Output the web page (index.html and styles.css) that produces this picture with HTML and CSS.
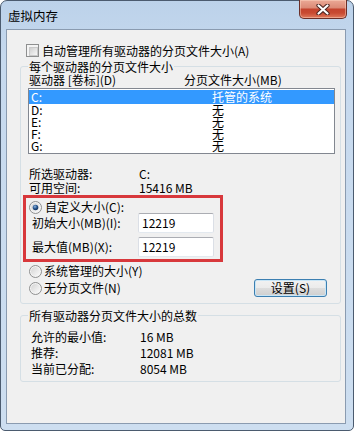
FILE: index.html
```html
<!DOCTYPE html>
<html lang="zh-CN">
<head>
<meta charset="utf-8">
<title>虚拟内存</title>
<link rel="stylesheet" href="styles.css">
</head>
<body>
<div class="window">
  <div class="titlebar">
    <span class="title">虚拟内存</span>
    <span class="close">
      <svg width="14" height="11" viewBox="0 0 14 11">
        <path d="M2.5 1.5 L11.5 9.5 M11.5 1.5 L2.5 9.5" stroke="#4a2420" stroke-width="4.2" stroke-linecap="round" fill="none"/>
        <path d="M2.5 1.5 L11.5 9.5 M11.5 1.5 L2.5 9.5" stroke="#ffffff" stroke-width="2.2" stroke-linecap="round" fill="none"/>
      </svg>
    </span>
  </div>
  <div class="client">
    <div class="check-row">
      <span class="checkbox"><span class="checkbox-in"></span></span>
      <span>自动管理所有驱动器的分页文件大小(A)</span>
    </div>

    <fieldset class="group g1">
      <legend>每个驱动器的分页文件大小</legend>
      <div class="list-head"><span>驱动器 [卷标](D)</span><span>分页文件大小(MB)</span></div>
      <div class="listbox">
        <div class="row sel"><span>C:</span><span>托管的系统</span></div>
        <div class="row"><span>D:</span><span>无</span></div>
        <div class="row"><span>E:</span><span>无</span></div>
        <div class="row"><span>F:</span><span>无</span></div>
        <div class="row"><span>G:</span><span>无</span></div>
      </div>
      <div class="info first"><span>所选驱动器:</span><span>C:</span></div>
      <div class="info"><span>可用空间:</span><span>15416 MB</span></div>

      <div class="highlight">
        <div class="radio-row in-box">
          <svg class="radio" width="13" height="13" viewBox="0 0 13 13">
            <defs>
              <linearGradient id="rg1" x1="0" y1="0" x2="1" y2="1">
                <stop offset="0" stop-color="#d4d4d4"/>
                <stop offset="1" stop-color="#fbfbfb"/>
              </linearGradient>
              <radialGradient id="dot1" cx="0.4" cy="0.35" r="0.7">
                <stop offset="0" stop-color="#8fb4de"/>
                <stop offset="0.5" stop-color="#2c5a92"/>
                <stop offset="1" stop-color="#0d2a52"/>
              </radialGradient>
            </defs>
            <circle cx="6.5" cy="6.5" r="6" fill="#f4f4f4" stroke="#8e8f8f"/>
            <circle cx="6.5" cy="6.5" r="4.5" fill="url(#rg1)"/>
            <circle cx="6.5" cy="6.5" r="2.8" fill="url(#dot1)"/>
          </svg>
          <span>自定义大小(C):</span>
        </div>
        <div class="field"><span class="field-label">初始大小(MB)(I):</span><span class="input">12219</span></div>
        <div class="field second"><span class="field-label">最大值(MB)(X):</span><span class="input">12219</span></div>
      </div>

      <div class="radio-row r2">
        <svg class="radio" width="13" height="13" viewBox="0 0 13 13">
          <defs>
            <linearGradient id="rg2" x1="0" y1="0" x2="1" y2="1">
              <stop offset="0" stop-color="#d4d4d4"/>
              <stop offset="1" stop-color="#fbfbfb"/>
            </linearGradient>
          </defs>
          <circle cx="6.5" cy="6.5" r="6" fill="#f4f4f4" stroke="#8e8f8f"/>
          <circle cx="6.5" cy="6.5" r="4.5" fill="url(#rg2)"/>
        </svg>
        <span>系统管理的大小(Y)</span>
      </div>
      <div class="radio-row r3">
        <svg class="radio" width="13" height="13" viewBox="0 0 13 13">
          <defs>
            <linearGradient id="rg3" x1="0" y1="0" x2="1" y2="1">
              <stop offset="0" stop-color="#d4d4d4"/>
              <stop offset="1" stop-color="#fbfbfb"/>
            </linearGradient>
          </defs>
          <circle cx="6.5" cy="6.5" r="6" fill="#f4f4f4" stroke="#8e8f8f"/>
          <circle cx="6.5" cy="6.5" r="4.5" fill="url(#rg3)"/>
        </svg>
        <span>无分页文件(N)</span>
        <button class="btn" type="button">设置(S)</button>
      </div>
    </fieldset>

    <fieldset class="group g2">
      <legend>所有驱动器分页文件大小的总数</legend>
      <div class="total"><span>允许的最小值:</span><span>16 MB</span></div>
      <div class="total"><span>推荐:</span><span>12081 MB</span></div>
      <div class="total"><span>当前已分配:</span><span>8054 MB</span></div>
    </fieldset>
  </div>
</div>
</body>
</html>
```

FILE: styles.css
```css
html, body {
  margin: 0;
  padding: 0;
}

body {
  width: 354px;
  height: 431px;
  overflow: hidden;
  font-family: "Noto Sans CJK SC", "Noto Sans", sans-serif;
  font-size: 12px;
  color: #000;
  background: #ffffff;
}

.window {
  box-sizing: border-box;
  width: 354px;
  height: 431px;
  border: 1px solid #4b5b6f;
  border-radius: 7px 7px 5px 5px;
  background: linear-gradient(to bottom, #bcd2ea 0, #c6d9ee 60px, #cddef0 100%);
  display: flex;
  flex-direction: column;
}

.titlebar {
  height: 28px;
  display: flex;
  align-items: flex-start;
  flex: none;
}

.title {
  padding: 7px 0 0 7px;
  font-size: 12.5px;
  line-height: 15px;
  color: #000;
}

.close {
  margin-left: auto;
  margin-right: 6px;
  margin-top: -1px;
  box-sizing: border-box;
  width: 48px;
  height: 19px;
  border: 1px solid #6b2f28;
  border-top: none;
  border-radius: 0 0 5px 5px;
  background: linear-gradient(to bottom, #eba996 0%, #dc8b77 42%, #c4442e 52%, #c84a31 72%, #df7a5d 100%);
  box-shadow: inset 0 0 0 1px rgba(255, 220, 200, 0.45);
  display: flex;
  align-items: center;
  justify-content: center;
}

.client {
  flex: 1;
  margin: 0 7px 6px 5px;
  border: 1px solid #8a9bb0;
  background: #f0f0f0;
  display: flex;
  flex-direction: column;
}

.check-row {
  margin-top: 14px;
  padding-left: 19px;
  height: 13px;
  display: flex;
  align-items: center;
  gap: 3px;
  line-height: 13px;
}

.checkbox {
  box-sizing: border-box;
  width: 13px;
  height: 13px;
  border: 1px solid #8e8f8f;
  background: #f4f4f4;
  padding: 2px;
  flex: none;
}

.checkbox-in {
  display: block;
  width: 7px;
  height: 7px;
  border: 1px solid #c9c9c9;
  background: linear-gradient(135deg, #cfcfcf, #f7f7f7);
}

.group {
  border: 1px solid #d5dfe5;
  border-radius: 3px;
  min-inline-size: 0;
  margin: 0;
}

.group legend {
  padding: 0 1px;
  font-size: 12px;
  line-height: 13px;
}

.g1 {
  margin: 3px 4px 0 13px;
  padding: 0 5px 6px 7px;
}

.list-head {
  margin-top: 1px;
  padding-left: 1px;
  display: grid;
  grid-template-columns: 155px 1fr;
  line-height: 12px;
}

.listbox {
  box-sizing: border-box;
  margin-top: 2px;
  height: 66px;
  border: 1px solid #828790;
  background: #ffffff;
  padding-top: 1px;
}

.row {
  display: grid;
  grid-template-columns: 181px 1fr;
  padding-left: 2px;
  height: 12px;
  line-height: 12px;
}

.row.sel {
  height: 14px;
  line-height: 14px;
  background: #3399ff;
  color: #ffffff;
}

.info {
  display: grid;
  grid-template-columns: 110px 1fr;
  padding-left: 1px;
  line-height: 12px;
  margin-top: 2px;
}

.info.first {
  margin-top: 14px;
}

.highlight {
  box-sizing: border-box;
  width: 200px;
  margin: 1px 0 0 -5px;
  border: 3px solid #d8383c;
  padding: 3px 0 2px 0;
}

.radio-row {
  display: flex;
  align-items: center;
  gap: 2px;
  line-height: 12px;
  height: 12px;
}

.radio {
  flex: none;
  display: block;
}

.radio-row.in-box {
  padding-left: 3px;
  gap: 3px;
}

.field {
  display: flex;
  align-items: center;
  height: 20px;
}

.field.second {
  margin-top: 4px;
}

.field-label {
  box-sizing: border-box;
  width: 112px;
  padding-left: 6px;
  line-height: 12px;
}

.input {
  box-sizing: border-box;
  width: 76px;
  height: 20px;
  border: 1px solid #dbdfe6;
  border-top-color: #abadb3;
  border-bottom-color: #e3e9ef;
  border-radius: 2px;
  background: #ffffff;
  padding-left: 3px;
  line-height: 18px;
}

.radio-row.r2 {
  margin-top: 3px;
  padding-left: 1px;
}

.radio-row.r3 {
  margin-top: 2px;
  padding-left: 1px;
  height: 18px;
}

.btn {
  margin: 0 8px 0 auto;
  box-sizing: border-box;
  width: 73px;
  height: 18px;
  padding: 0;
  border: 1px solid #3c7fb1;
  border-radius: 3px;
  background: linear-gradient(to bottom, #f2f2f2 0%, #ebebeb 50%, #dddddd 51%, #cfcfcf 100%);
  box-shadow: inset 0 0 0 1px #c9e6f7;
  font-family: "Noto Sans CJK SC", "Noto Sans", sans-serif;
  font-size: 12px;
  line-height: 16px;
  color: #000;
}

.g2 {
  margin: 5px 4px 0 13px;
  padding: 0 5px 4px 7px;
}

.total {
  display: grid;
  grid-template-columns: 109px 1fr;
  padding-left: 3px;
  line-height: 16px;
}

.total:first-of-type {
  margin-top: 7px;
}
```
